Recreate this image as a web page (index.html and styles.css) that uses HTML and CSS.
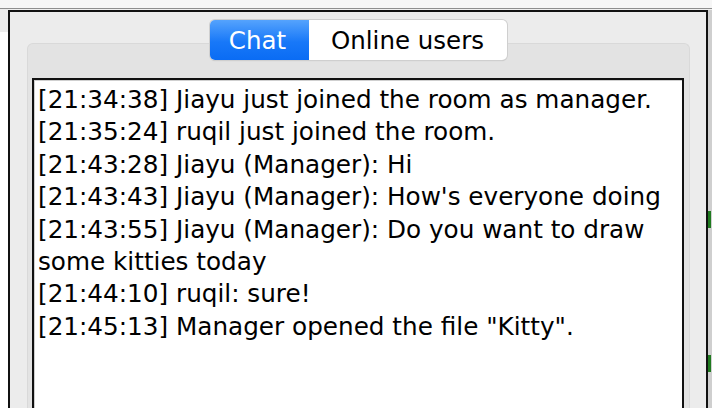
FILE: index.html
```html
<!DOCTYPE html>
<html>
<head>
<meta charset="utf-8">
<link rel="stylesheet" href="styles.css">
</head>
<body>
<div class="topbar"></div>
<div class="main">
  <div class="left-strip"></div>
  <div class="window">
    <div class="seg-wrap">
      <div class="segmented">
        <span class="seg seg-active">Chat</span>
        <span class="seg">Online users</span>
      </div>
    </div>
    <div class="panel">
      <div class="chat">
        <div class="msg">[21:34:38] Jiayu just joined the room as manager.</div>
        <div class="msg">[21:35:24] ruqil just joined the room.</div>
        <div class="msg">[21:43:28] Jiayu (Manager): Hi</div>
        <div class="msg">[21:43:43] Jiayu (Manager): How's everyone doing</div>
        <div class="msg">[21:43:55] Jiayu (Manager): Do you want to draw some kitties today</div>
        <div class="msg">[21:44:10] ruqil: sure!</div>
        <div class="msg">[21:45:13] Manager opened the file "Kitty".</div>
      </div>
    </div>
  </div>
  <div class="right-strip">
    <div class="gap1"></div>
    <div class="mark"></div>
    <div class="gap2"></div>
    <div class="mark"></div>
  </div>
</div>
</body>
</html>
```

FILE: styles.css
```css
html, body {
  margin: 0;
  padding: 0;
  background: #ffffff;
  width: 712px;
  height: 408px;
  overflow: hidden;
  font-family: "DejaVu Sans", "Liberation Sans", sans-serif;
}

.topbar {
  height: 8px;
  background: #f6f6f6;
  border-bottom: 1px solid #8e8e8e;
}

.main {
  display: flex;
  height: 399px;
  padding-top: 1px;
  background: #f0f0f0;
}

.left-strip {
  width: 8px;
  background: linear-gradient(#ececec 0 23px, #ffffff 23px);
  margin-top: -1px;
}

.window {
  width: 700px;
  border: 2px solid #111;
  border-bottom: none;
  background: #ececec;
  padding: 8px 16px 0 17px;
  box-sizing: border-box;
  display: flex;
  flex-direction: column;
}

.seg-wrap {
  display: flex;
  justify-content: center;
  position: relative;
  z-index: 1;
  margin-left: -1px;
}

.segmented {
  display: flex;
  height: 40px;
  border-radius: 5px;
  background: #fff;
  box-shadow: 0 0 0 1px #cfcfcf, 0 1px 1px rgba(0,0,0,0.18);
  overflow: hidden;
}

.seg {
  display: flex;
  align-items: center;
  justify-content: center;
  font-size: 24.5px;
  color: #000;
  width: 198px;
  padding-top: 1px;
  box-sizing: border-box;
}

.seg-active {
  width: 99px;
  color: #fff;
  padding-right: 3px;
  background: linear-gradient(#55a3fd, #1878f8 55%, #0a6cf4);
}

.panel {
  margin-top: -17px;
  background: #e3e3e3;
  border: 1px solid #d9d9d9;
  border-bottom: none;
  border-radius: 6px 6px 0 0;
  padding: 34px 5px 0 4px;
  flex: 1;
  display: flex;
  flex-direction: column;
}

.chat {
  flex: 1;
  background: #fff;
  border: 2px solid #111;
  border-bottom: none;
  box-shadow: inset 1px 1px 0 #cfcfcf;
  padding: 4px 4px 0 4px;
  font-size: 24.7px;
  line-height: 32.4px;
  color: #000;
}

.right-strip {
  width: 4px;
  background: #cfcfcf;
  display: flex;
  flex-direction: column;
}

.gap1 { height: 201px; }
.gap2 { height: 127px; }

.mark {
  height: 17px;
  width: 3px;
  background: #1f7a1f;
}
```
